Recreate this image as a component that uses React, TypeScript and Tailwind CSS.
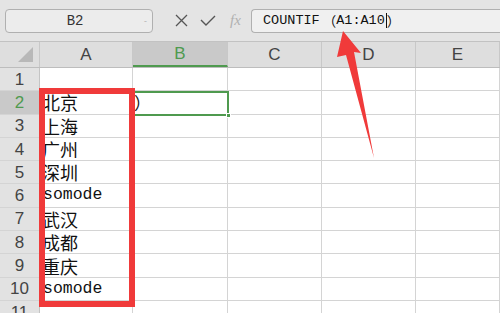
import React from "react";

const columns = [
  { label: "A", width: "w-[93px]" },
  { label: "B", width: "w-[95px]" },
  { label: "C", width: "w-[94px]" },
  { label: "D", width: "w-[94px]" },
  { label: "E", width: "flex-1" },
];

const cityRows: Record<number, string> = {
  2: "北京",
  3: "上海",
  4: "广州",
  5: "深圳",
  6: "somode",
  7: "武汉",
  8: "成都",
  9: "重庆",
  10: "somode",
};

const rows = [1, 2, 3, 4, 5, 6, 7, 8, 9, 10, 11];

const cjk = { fontFamily: '"Noto Sans CJK SC", "Liberation Sans", sans-serif' };
const mono = { fontFamily: '"Liberation Mono", "Noto Sans CJK SC", monospace' };

const App: React.FC = () => {
  return (
    <div className="relative w-[500px] h-[313px] overflow-hidden bg-white">
      {/* Toolbar */}
      <div className="flex items-center h-[42px] bg-[#e4e4e4] border-b border-[#c2c2c2]">
        <div className="ml-[5px] flex items-center w-[148px] h-[24px] rounded-[4px] border border-[#b0b0b0] bg-[#ececec]">
          <span className="flex-1 text-center text-[14px] leading-none text-[#333]" style={mono}>
            B2
          </span>
          <span className="mr-[5px] text-[9px] leading-none text-[#b5b5b5]">-</span>
        </div>
        <div className="flex items-center ml-[21px] w-[77px] gap-[11px]">
          <svg width="15" height="15" viewBox="0 0 15 15">
            <path d="M2 2L13 13M13 2L2 13" stroke="#555" strokeWidth="1.3" fill="none" />
          </svg>
          <svg width="16" height="13" viewBox="0 0 16 13">
            <path d="M1 6L6 11L15 2" stroke="#555" strokeWidth="1.4" fill="none" />
          </svg>
          <span
            className="text-[15px] leading-none italic text-[#b0b0b0] ml-[3px]"
            style={{ fontFamily: '"Liberation Serif", serif' }}
          >
            fx
          </span>
        </div>
        <div className="flex-1 flex items-center h-[24px] rounded-l-[4px] border border-r-0 border-[#b0b0b0] bg-[#f0f0f0] pl-[11px] text-[13.5px] leading-none text-[#111]">
          <span style={mono}>COUNTIF</span>
          <span className="pl-[3px]" style={cjk}>（</span>
          <span style={mono}>A1:A10</span>
          <span className="w-px h-[15px] bg-[#111] ml-[1px]" />
          <span style={cjk}>）</span>
        </div>
      </div>

      {/* Column headers */}
      <div className="flex h-[26px] bg-[#dedede] border-b border-[#bdbdbd]">
        <div className="relative w-[40px] border-r border-[#c8c8c8]">
          <svg className="absolute right-[6px] bottom-[5px]" width="15" height="15" viewBox="0 0 15 15">
            <path d="M15 0L15 15L0 15Z" fill="#b8b8b8" />
          </svg>
        </div>
        {columns.map((col) =>
          col.label === "B" ? (
            <div
              key={col.label}
              className={`${col.width} flex items-center justify-center bg-[#c9c9c9] border-r border-[#c8c8c8] border-b-2 border-b-[#4f9a4f] text-[17px] leading-none text-[#4f9a4f]`}
              style={{ fontFamily: '"Liberation Sans", sans-serif' }}
            >
              {col.label}
            </div>
          ) : (
            <div
              key={col.label}
              className={`${col.width} flex items-center justify-center border-r border-[#c8c8c8] text-[17px] leading-none text-[#444]`}
              style={{ fontFamily: '"Liberation Sans", sans-serif' }}
            >
              {col.label}
            </div>
          )
        )}
      </div>

      {/* Rows */}
      {rows.map((r) => (
        <div key={r} className="flex h-[23.3px] border-b border-[#d4d4d4]">
          <div
            className={`w-[40px] flex items-center justify-center border-r border-[#c4c4c4] text-[17px] leading-none ${
              r === 2 ? "bg-[#c9c9c9] text-[#4f9a4f]" : "bg-[#e2e2e2] text-[#444]"
            }`}
            style={{ fontFamily: '"Liberation Sans", sans-serif' }}
          >
            {r}
          </div>
          {columns.map((col) => (
            <div
              key={col.label}
              className={`${col.width} flex items-center border-r border-[#d4d4d4] overflow-hidden whitespace-nowrap`}
            >
              {col.label === "A" && cityRows[r] ? (
                cityRows[r] === "somode" ? (
                  <span className="pl-[3px] text-[16.5px] leading-none text-[#111]" style={mono}>
                    somode
                  </span>
                ) : (
                  <span className="pl-[2px] text-[18px] leading-none text-[#111]" style={cjk}>
                    {cityRows[r]}
                  </span>
                )
              ) : null}
              {col.label === "B" && r === 2 ? (
                <span className="pl-[1px] text-[17px] leading-none text-[#111]" style={cjk}>
                  ）
                </span>
              ) : null}
            </div>
          ))}
        </div>
      ))}

      {/* Selected cell B2 */}
      <div className="absolute left-[132px] top-[91px] w-[97px] h-[25px] border-2 border-[#4f9a4f]">
        <div className="absolute -right-[4px] -bottom-[4px] w-[5px] h-[5px] bg-[#4f9a4f] border border-white" />
      </div>

      {/* Red highlight box */}
      <div className="absolute left-[39px] top-[88px] w-[96px] h-[219px] border-[6px] border-[#f03a3a]" />

      {/* Arrow */}
      <svg className="absolute left-0 top-0" width="500" height="313" viewBox="0 0 500 313">
        <polygon points="343,31 361,53 354,52 374,158 346,55 337,57" fill="#f03a3a" />
      </svg>
    </div>
  );
};

export default App;
